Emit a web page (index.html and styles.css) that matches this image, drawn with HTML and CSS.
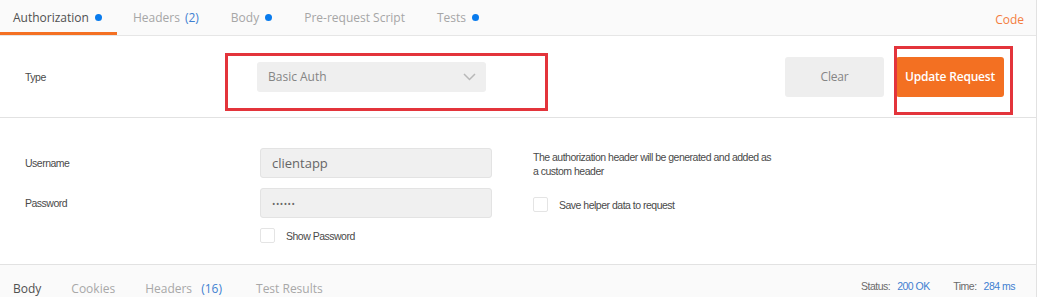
FILE: index.html
```html
<!DOCTYPE html>
<html lang="en">
<head>
    <meta charset="UTF-8">
    <meta name="viewport" content="width=device-width, initial-scale=1.0">
    <title>Authorization</title>
    <link rel="stylesheet" href="styles.css">
</head>
<body>
    <div class="pane">
        <div class="tabs">
            <div class="tab active">Authorization <span class="dot"></span></div>
            <div class="tab">Headers <span class="count">(2)</span></div>
            <div class="tab">Body <span class="dot"></span></div>
            <div class="tab">Pre-request Script</div>
            <div class="tab">Tests <span class="dot"></span></div>
            <a class="code-link" href="#">Code</a>
        </div>

        <div class="type-row">
            <label class="field-label">Type</label>
            <div class="select">
                <span>Basic Auth</span>
                <svg width="13" height="8" viewBox="0 0 13 8"><path d="M1 1 L6.5 6.5 L12 1" fill="none" stroke="#b8b8b8" stroke-width="1.5"/></svg>
            </div>
            <div class="actions">
                <button class="btn btn-clear">Clear</button>
                <button class="btn btn-update">Update Request</button>
            </div>
        </div>

        <div class="auth">
            <div class="auth-form">
                <label class="field-label" for="username">Username</label>
                <input class="text-input" type="text" id="username" value="clientapp">
                <label class="field-label" for="password">Password</label>
                <input class="text-input pass" type="password" id="password" value="secret">
                <span></span>
                <label class="check"><span class="box"></span>Show Password</label>
            </div>
            <div class="auth-help">
                <p class="help-text">The authorization header will be generated and added as<br>a custom header</p>
                <label class="check"><span class="box"></span>Save helper data to request</label>
            </div>
        </div>

        <div class="response-bar">
            <div class="res-tab active">Body</div>
            <div class="res-tab">Cookies</div>
            <div class="res-tab">Headers <span class="count">(16)</span></div>
            <div class="res-tab">Test Results</div>
            <div class="res-meta">
                <span class="meta-label">Status:</span><span class="meta-value">200 OK</span>
                <span class="meta-label time">Time:</span><span class="meta-value">284 ms</span>
            </div>
        </div>

        <!-- annotation boxes drawn over the screenshot -->
        <div class="mark mark-type"></div>
        <div class="mark mark-update"></div>
    </div>
</body>
</html>
```
FILE: styles.css
```css
body {
    margin: 0;
    font-family: "Open Sans", Arial, sans-serif;
    background: #fff;
}
.pane {
    position: relative;
    width: 1036px;
    height: 297px;
    border-right: 1px solid #e2e2e2;
    overflow: hidden;
}
.tabs {
    display: flex;
    align-items: center;
    height: 35px;
    background: #fafafa;
    border-bottom: 1px solid #e6e6e6;
    font-size: 12px;
}
.tab {
    display: flex;
    align-items: center;
    height: 100%;
    padding: 0 16px;
    color: #a6a6a6;
    box-sizing: border-box;
}
.tab:first-child {
    padding-left: 13px;
    padding-right: 15px;
}
.tab.active {
    color: #505050;
    box-shadow: inset 0 -3px 0 #f47023;
}
.dot {
    display: inline-block;
    width: 7px;
    height: 7px;
    margin-left: 6px;
    border-radius: 50%;
    background: #097bed;
}
.count {
    margin-left: 5px;
    color: #3f7fd1;
}
.code-link {
    margin-left: auto;
    margin-right: 12px;
    padding-top: 3px;
    color: #f47d3f;
    text-decoration: none;
}
.field-label {
    font-family: "Liberation Sans", Arial, sans-serif;
    font-size: 10.5px;
    letter-spacing: -0.5px;
    color: #4a4a4a;
}
.type-row {
    display: flex;
    align-items: center;
    height: 81px;
    padding: 0 32px 0 25px;
    border-bottom: 1px solid #e2e2e2;
}
.type-row .field-label {
    width: 232px;
}
.select {
    display: flex;
    align-items: center;
    justify-content: space-between;
    width: 229px;
    height: 30px;
    padding: 0 10px 0 11px;
    box-sizing: border-box;
    background: #efefef;
    border-radius: 3px;
    font-size: 12px;
    color: #858585;
}
.actions {
    display: flex;
    gap: 12px;
    margin-left: auto;
}
.btn {
    height: 40px;
    border: none;
    border-radius: 3px;
    font-family: "Open Sans", Arial, sans-serif;
    font-size: 12px;
    letter-spacing: -0.2px;
    cursor: pointer;
}
.btn-clear {
    width: 99px;
    background: #eeeeee;
    color: #858585;
}
.btn-update {
    width: 108px;
    background: #f37022;
    color: #fff;
    font-weight: 600;
}
.auth {
    display: flex;
    height: 146px;
    padding: 30px 0 0 25px;
    box-sizing: border-box;
}
.auth-form {
    display: grid;
    grid-template-columns: 235px 232px;
    grid-auto-rows: min-content;
    row-gap: 10px;
    align-items: center;
}
.text-input {
    height: 30px;
    padding: 0 11px;
    box-sizing: border-box;
    background: #f0f0f0;
    border: 1px solid #e3e3e3;
    border-radius: 3px;
    font-family: "Open Sans", Arial, sans-serif;
    font-size: 13px;
    color: #666666;
    outline: none;
}
.text-input.pass {
    font-size: 9px;
    letter-spacing: 0.5px;
}
.check {
    display: flex;
    align-items: center;
    font-family: "Liberation Sans", Arial, sans-serif;
    font-size: 10.5px;
    letter-spacing: -0.5px;
    color: #4a4a4a;
}
.box {
    width: 13px;
    height: 13px;
    margin-right: 11px;
    border: 1px solid #e4e4e4;
    border-radius: 2px;
    background: #fff;
}
.auth-help {
    margin-left: 41px;
    padding-top: 2px;
}
.help-text {
    margin: 0 0 19px;
    font-family: "Liberation Sans", Arial, sans-serif;
    font-size: 10.5px;
    line-height: 14px;
    letter-spacing: -0.5px;
    color: #4a4a4a;
}
.response-bar {
    display: flex;
    height: 40px;
    padding: 15px 21px 0 13px;
    box-sizing: border-box;
    background: #fafafa;
    border-top: 1px solid #e2e2e2;
    font-size: 12px;
    line-height: 17px;
}
.res-tab {
    margin-right: 30px;
    color: #a8a8a8;
}
.res-tab.active {
    color: #505050;
}
.res-tab .count {
    margin-left: 6px;
}
.res-tab:nth-child(3) {
    margin-right: 34px;
}
.res-meta {
    margin-left: auto;
    margin-top: -2px;
    font-family: "Liberation Sans", Arial, sans-serif;
    font-size: 10.5px;
    letter-spacing: -0.5px;
}
.meta-label {
    color: #6a6a6a;
    margin-right: 7px;
}
.meta-label.time {
    margin-left: 21px;
}
.meta-value {
    color: #3f7fd1;
}
.mark {
    position: absolute;
    border: 3px solid #e3343b;
    box-sizing: border-box;
}
.mark-type {
    left: 225px;
    top: 53px;
    width: 323px;
    height: 58px;
}
.mark-update {
    left: 894px;
    top: 46px;
    width: 119px;
    height: 69px;
}
```
